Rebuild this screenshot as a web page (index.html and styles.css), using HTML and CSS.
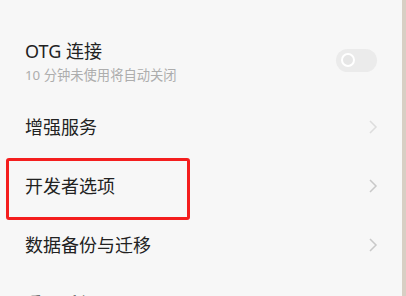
FILE: index.html
```html
<!DOCTYPE html>
<html>
	<head>
		<title>其他设置</title>
		<meta charset="utf-8"/>
		<link rel="stylesheet" href="styles.css">
	</head>
	<body>
		<div id="settings">
			<div class="row first">
				<div class="label">
					<div class="title">OTG 连接</div>
					<div class="sub">10 分钟未使用将自动关闭</div>
				</div>
				<span class="toggle"><span class="knob"></span></span>
			</div>
			<div class="row">
				<div class="title">增强服务</div>
				<svg class="chev faint" width="10" height="16" viewBox="0 0 10 16"><path d="M2 2 L8 8 L2 14" /></svg>
			</div>
			<div class="row">
				<div class="title">开发者选项</div>
				<svg class="chev" width="10" height="16" viewBox="0 0 10 16"><path d="M2 2 L8 8 L2 14" /></svg>
			</div>
			<div class="row">
				<div class="title">数据备份与迁移</div>
				<svg class="chev" width="10" height="16" viewBox="0 0 10 16"><path d="M2 2 L8 8 L2 14" /></svg>
			</div>
			<div class="row">
				<div class="title">重置手机</div>
				<svg class="chev" width="10" height="16" viewBox="0 0 10 16"><path d="M2 2 L8 8 L2 14" /></svg>
			</div>
			<div class="highlight"></div>
		</div>
	</body>
</html>
```

FILE: styles.css
```css
html { width:100%; height:100%; }
body {
	margin:0px;
	background:#f7f7f7;
	color:#222;
	font-family:"Noto Sans", "Noto Sans CJK SC", sans-serif;
	height:100%;
	overflow:hidden;
}

#settings {
	position:relative;
	width:402px;
	height:100%;
	border-right:4px solid #d8cfc4;
	box-sizing:content-box;
}

.row {
	display:flex;
	align-items:center;
	justify-content:space-between;
	height:59px;
	padding:0 25px;
	box-sizing:border-box;
}
.row.first {
	height:97px;
	padding-top:38px;
	padding-bottom:13px;
	align-items:center;
}

.title {
	font-size:18px;
	line-height:24px;
}
.sub {
	font-size:13.3px;
	line-height:18px;
	color:#adadad;
	margin-top:3px;
}

.toggle {
	display:flex;
	align-items:center;
	width:41px;
	height:23px;
	border-radius:12px;
	background:#ebebeb;
	padding-left:5px;
	box-sizing:border-box;
	margin-top:-2px;
}
.knob {
	width:10px;
	height:10px;
	border-radius:50%;
	border:2.5px solid #fff;
	background:#e6e6e6;
}

.chev {
	margin-right:-1px;
}
.chev path {
	fill:none;
	stroke:#c9c9c9;
	stroke-width:1.5;
}
.chev.faint { opacity:0.55; }

.highlight {
	position:absolute;
	left:6px;
	top:158px;
	width:184px;
	height:62px;
	border:3px solid #f41e1e;
	border-radius:3px;
	box-sizing:border-box;
}
```
